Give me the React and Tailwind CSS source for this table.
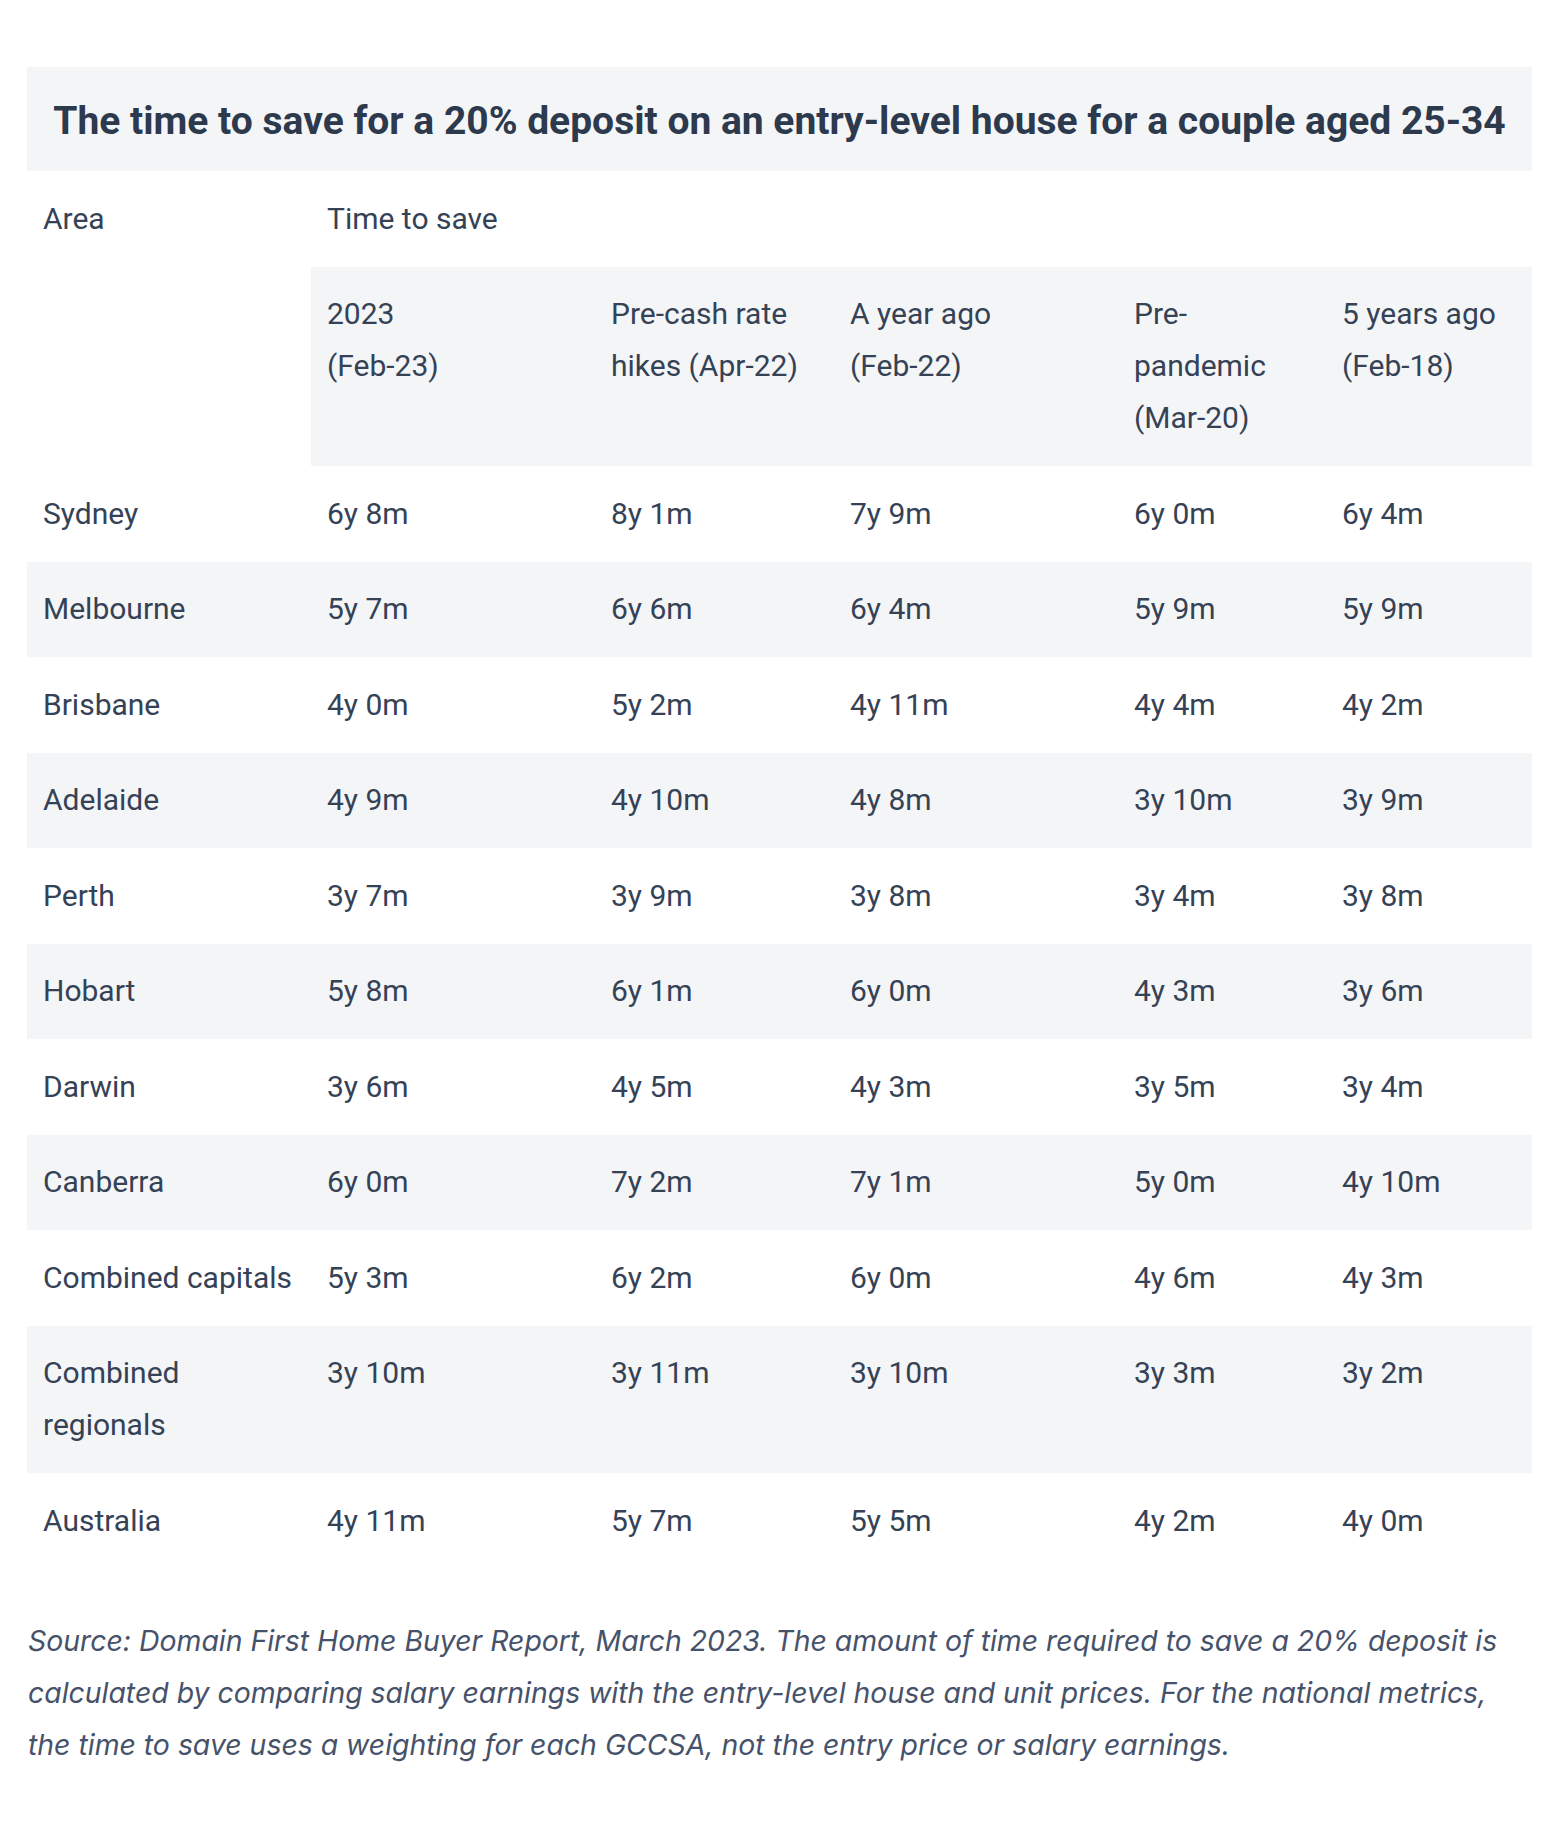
import React from 'react';

const columns = [
  { label: ['2023', '(Feb-23)'] },
  { label: ['Pre-cash rate', 'hikes (Apr-22)'] },
  { label: ['A year ago', '(Feb-22)'] },
  { label: ['Pre-', 'pandemic', '(Mar-20)'] },
  { label: ['5 years ago', '(Feb-18)'] },
];

const rows = [
  ['Sydney', '6y 8m', '8y 1m', '7y 9m', '6y 0m', '6y 4m'],
  ['Melbourne', '5y 7m', '6y 6m', '6y 4m', '5y 9m', '5y 9m'],
  ['Brisbane', '4y 0m', '5y 2m', '4y 11m', '4y 4m', '4y 2m'],
  ['Adelaide', '4y 9m', '4y 10m', '4y 8m', '3y 10m', '3y 9m'],
  ['Perth', '3y 7m', '3y 9m', '3y 8m', '3y 4m', '3y 8m'],
  ['Hobart', '5y 8m', '6y 1m', '6y 0m', '4y 3m', '3y 6m'],
  ['Darwin', '3y 6m', '4y 5m', '4y 3m', '3y 5m', '3y 4m'],
  ['Canberra', '6y 0m', '7y 2m', '7y 1m', '5y 0m', '4y 10m'],
  ['Combined capitals', '5y 3m', '6y 2m', '6y 0m', '4y 6m', '4y 3m'],
  ['Combined regionals', '3y 10m', '3y 11m', '3y 10m', '3y 3m', '3y 2m'],
  ['Australia', '4y 11m', '5y 7m', '5y 5m', '4y 2m', '4y 0m'],
];

const cell = 'px-[16px] py-[21.75px] text-left align-top font-normal';

const App = () => {
  return (
    <div className="min-h-screen bg-white pt-[67px] text-[#354256]" style={{ fontFamily: 'Roboto, "Liberation Sans", sans-serif' }}>
      <table className="ml-[27px] w-[1505px] table-fixed border-collapse text-[30px] leading-[52px]">
        <colgroup>
          <col className="w-[284px]" />
          <col className="w-[284px]" />
          <col className="w-[239px]" />
          <col className="w-[284px]" />
          <col className="w-[208px]" />
          <col className="w-[206px]" />
        </colgroup>
        <thead>
          <tr className="bg-[#f4f5f7]">
            <th colSpan={6} className="h-[104px] px-[20px] pt-[3px] text-center align-middle text-[39px] font-bold leading-[52px] text-[#2d394d]">
              The time to save for a 20% deposit on an entry-level house for a couple aged 25-34
            </th>
          </tr>
          <tr>
            <th className={cell}>Area</th>
            <th colSpan={5} className={cell}>Time to save</th>
          </tr>
          <tr>
            <th className={cell}></th>
            {columns.map((col, i) => (
              <th key={i} className={`${cell} bg-[#f4f5f7]`}>
                {col.label.map((line, j) => (
                  <div key={j}>{line}</div>
                ))}
              </th>
            ))}
          </tr>
        </thead>
        <tbody>
          {rows.map((row, i) => (
            <tr key={row[0]} className={i % 2 === 1 ? 'bg-[#f4f5f7]' : 'bg-white'}>
              {row.map((value, j) => (
                <td key={j} className={cell}>
                  {row[0] === 'Combined regionals' && j === 0 ? (
                    <>
                      <div>Combined</div>
                      <div>regionals</div>
                    </>
                  ) : (
                    value
                  )}
                </td>
              ))}
            </tr>
          ))}
        </tbody>
      </table>

      <p className="ml-[28px] mt-[46px] w-[1490px] text-[28.4px] italic leading-[52px] text-[#46526a]" style={{ fontFamily: 'Inter, "Noto Sans", sans-serif' }}>
        Source: Domain First Home Buyer Report, March 2023. The amount of time required to save a 20% deposit is
        calculated by comparing salary earnings with the entry-level house and unit prices. For the national metrics,
        the time to save uses a weighting for each GCCSA, not the entry price or salary earnings.
      </p>
    </div>
  );
};

export default App;
